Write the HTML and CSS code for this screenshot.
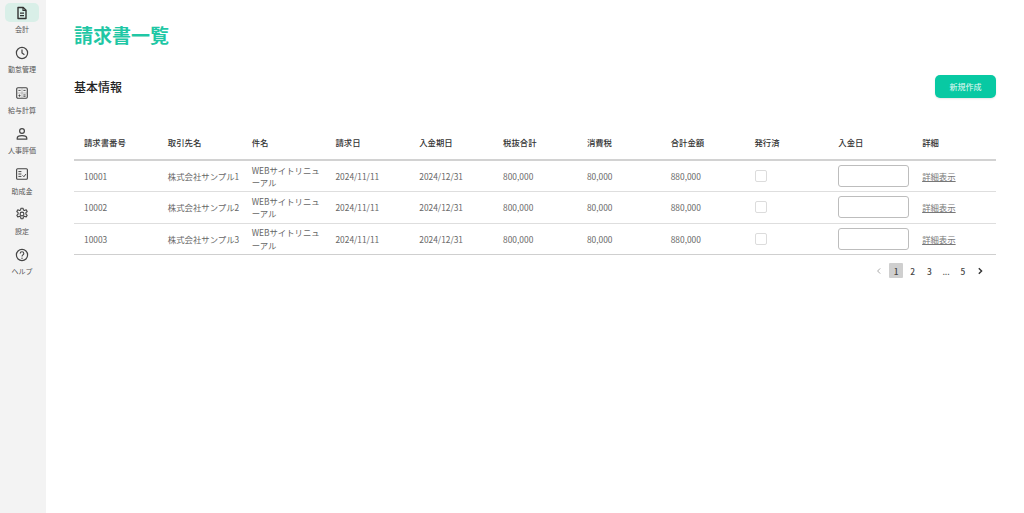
FILE: index.html
```html
<!DOCTYPE html>
<html lang="ja">
<head>
<meta charset="utf-8">
<title>請求書一覧</title>
<link rel="stylesheet" href="styles.css">
</head>
<body>
<div class="app">
  <nav class="sidebar">
    <a class="nav-item active">
      <span class="nav-icon"><svg viewBox="0 0 14 14" width="14" height="14"><path d="M3 1.5h5.2L11 4.3v8.2H3z" fill="none" stroke="#333" stroke-width="1.4" stroke-linejoin="round"/><path d="M8 1.5v3h3M5 7.2h4M5 9.6h4" fill="none" stroke="#333" stroke-width="1.2"/></svg></span>
      <span class="nav-label">会計</span>
    </a>
    <a class="nav-item">
      <span class="nav-icon"><svg viewBox="0 0 14 14" width="14" height="14"><circle cx="7" cy="7" r="5.6" fill="none" stroke="#444" stroke-width="1.2"/><path d="M7 3.6V7l2.4 1.8" fill="none" stroke="#444" stroke-width="1.2"/></svg></span>
      <span class="nav-label">勤怠管理</span>
    </a>
    <a class="nav-item">
      <span class="nav-icon"><svg viewBox="0 0 14 14" width="14" height="14"><rect x="1.7" y="1.7" width="10.6" height="10.6" rx="1.2" fill="none" stroke="#444" stroke-width="1.1"/><path d="M7 1.7v10.6M1.7 7h10.6" fill="none" stroke="#999" stroke-width=".6"/><path d="M3.4 4.4h2.2M8.4 4.4h2.2M3.4 9.6h2.2M4.5 8.5v2.2M8.4 8.9h2.2M8.4 10.3h2.2" fill="none" stroke="#444" stroke-width=".9"/></svg></span>
      <span class="nav-label">給与計算</span>
    </a>
    <a class="nav-item">
      <span class="nav-icon"><svg viewBox="0 0 14 14" width="14" height="14"><circle cx="7" cy="4" r="2.4" fill="none" stroke="#444" stroke-width="1.2"/><path d="M2.2 12.2v-1c0-1.6 2.2-2.6 4.8-2.6s4.8 1 4.8 2.6v1z" fill="none" stroke="#444" stroke-width="1.2" stroke-linejoin="round"/></svg></span>
      <span class="nav-label">人事評価</span>
    </a>
    <a class="nav-item">
      <span class="nav-icon"><svg viewBox="0 0 14 14" width="14" height="14"><rect x="1.6" y="1.8" width="10.8" height="10.4" rx="1" fill="none" stroke="#444" stroke-width="1.1"/><path d="M3.4 4.6h3M3.4 7h3M3.4 9.4h3M7.6 8.4l1.3 1.3 2-2.6" fill="none" stroke="#444" stroke-width="1"/></svg></span>
      <span class="nav-label">助成金</span>
    </a>
    <a class="nav-item">
      <span class="nav-icon"><svg viewBox="0 0 14 14" width="14" height="14"><path d="M6 1.2h2l.4 1.7 1.2.6 1.6-.7 1 1.7-1.3 1.2v1.4l1.3 1.2-1 1.7-1.6-.7-1.2.7-.4 1.7H6l-.4-1.7-1.2-.7-1.6.7-1-1.7 1.3-1.2V5.7L1.8 4.5l1-1.7 1.6.7 1.2-.6z" fill="none" stroke="#444" stroke-width="1.1" stroke-linejoin="round"/><circle cx="7" cy="7" r="1.9" fill="none" stroke="#444" stroke-width="1.1"/></svg></span>
      <span class="nav-label">設定</span>
    </a>
    <a class="nav-item">
      <span class="nav-icon"><svg viewBox="0 0 14 14" width="14" height="14"><circle cx="7" cy="7" r="5.6" fill="none" stroke="#444" stroke-width="1.2"/><path d="M5.2 5.5c0-1.1.8-1.8 1.8-1.8s1.8.7 1.8 1.7c0 1.4-1.8 1.5-1.8 3" fill="none" stroke="#444" stroke-width="1.1"/><circle cx="7" cy="10.2" r=".7" fill="#444"/></svg></span>
      <span class="nav-label">ヘルプ</span>
    </a>
  </nav>
  <main class="content">
    <h1 class="page-title">請求書一覧</h1>
    <div class="section-head">
      <h2 class="section-title">基本情報</h2>
      <button class="primary-btn" type="button">新規作成</button>
    </div>
    <table class="invoice-table">
      <thead>
        <tr>
          <th>請求書番号</th><th>取引先名</th><th>件名</th><th>請求日</th><th>入金期日</th><th>税抜合計</th><th>消費税</th><th>合計金額</th><th>発行済</th><th>入金日</th><th>詳細</th>
        </tr>
      </thead>
      <tbody>
        <tr>
          <td>10001</td><td>株式会社サンプル1</td><td>WEBサイトリニューアル</td><td>2024/11/11</td><td>2024/12/31</td><td>800,000</td><td>80,000</td><td>880,000</td>
          <td><span class="check"></span></td><td><span class="date-input"></span></td><td><a class="detail-link">詳細表示</a></td>
        </tr>
        <tr>
          <td>10002</td><td>株式会社サンプル2</td><td>WEBサイトリニューアル</td><td>2024/11/11</td><td>2024/12/31</td><td>800,000</td><td>80,000</td><td>880,000</td>
          <td><span class="check"></span></td><td><span class="date-input"></span></td><td><a class="detail-link">詳細表示</a></td>
        </tr>
        <tr>
          <td>10003</td><td>株式会社サンプル3</td><td>WEBサイトリニューアル</td><td>2024/11/11</td><td>2024/12/31</td><td>800,000</td><td>80,000</td><td>880,000</td>
          <td><span class="check"></span></td><td><span class="date-input"></span></td><td><a class="detail-link">詳細表示</a></td>
        </tr>
      </tbody>
    </table>
    <div class="pagination">
      <span class="page-item arrow muted"><svg viewBox="0 0 8 8" width="8" height="8"><path d="M5.2 1.4L2.6 4l2.6 2.6" fill="none" stroke="#aaa" stroke-width="1"/></svg></span>
      <span class="page-item current">1</span>
      <span class="page-item">2</span>
      <span class="page-item">3</span>
      <span class="page-item">...</span>
      <span class="page-item">5</span>
      <span class="page-item arrow"><svg viewBox="0 0 8 8" width="8" height="8"><path d="M2.8 1.2L5.6 4 2.8 6.8" fill="none" stroke="#333" stroke-width="1.4"/></svg></span>
    </div>
  </main>
</div>
</body>
</html>
```

FILE: styles.css
```css
* { box-sizing: border-box; }
html, body { margin: 0; height: 100%; background: #fff; }
body {
  font-family: "Noto Sans CJK JP", "Noto Sans", sans-serif;
  color: #333;
  overflow: hidden;
}
.app { display: flex; height: 513px; }
.sidebar {
  width: 46px;
  flex: none;
  background: #f3f3f3;
  display: flex;
  flex-direction: column;
  padding: 3px 2px 0 0;
}
.nav-item {
  display: flex;
  flex-direction: column;
  align-items: center;
  height: 40.4px;
}
.nav-icon {
  width: 34px;
  height: 19px;
  border-radius: 5px;
  display: flex;
  align-items: center;
  justify-content: center;
}
.active .nav-icon { background: #d9efe8; }
.nav-label {
  font-size: 7px;
  line-height: 10px;
  margin-top: 2px;
  color: #555;
  white-space: nowrap;
}
.content {
  flex: 1;
  padding: 0 28px;
  min-width: 0;
}
.page-title {
  margin: 0;
  padding-top: 21px;
  font-size: 19px;
  line-height: 28px;
  font-weight: 700;
  color: #1fc7a5;
}
.section-head {
  display: flex;
  justify-content: space-between;
  align-items: center;
  margin-top: 26px;
}
.section-title {
  margin: 0;
  font-size: 12px;
  line-height: 18px;
  font-weight: 500;
  color: #222;
}
.primary-btn {
  width: 61px;
  height: 23px;
  border: 0;
  padding: 0;
  border-radius: 5px;
  background: #08c9a3;
  color: #e8fbf6;
  font: 400 8px/23px "Noto Sans CJK JP", sans-serif;
  box-shadow: 0 1px 2px rgba(0, 0, 0, .1);
}
.invoice-table {
  width: 100%;
  margin-top: 27px;
  border-collapse: collapse;
  table-layout: fixed;
  font-size: 8.4px;
}
.invoice-table th {
  height: 35px;
  padding: 0 0 0 10px;
  text-align: left;
  font-weight: 500;
  color: #333;
  border-bottom: 2px solid #d2d2d2;
}
.invoice-table td {
  height: 31.5px;
  padding: 0 0 0 10px;
  color: #666;
  line-height: 12.5px;
  border-bottom: 1px solid #dedede;
}
.invoice-table tr:last-child td { border-bottom-color: #cfcfcf; }
.check {
  display: block;
  width: 12px;
  height: 12px;
  border: 1px solid #dcdcdc;
  border-radius: 2px;
  background: #fff;
}
.date-input {
  display: block;
  width: 71px;
  height: 22px;
  border: 1px solid #bdbdbd;
  border-radius: 3px;
  background: #fff;
}
.detail-link {
  color: #777;
  text-decoration: underline;
}
.pagination {
  display: flex;
  justify-content: flex-end;
  align-items: center;
  margin-top: 8px;
  padding-right: 9.5px;
  gap: 2.7px;
  font-size: 8.4px;
  font-weight: 500;
  color: #444;
}
.page-item {
  width: 14px;
  height: 15px;
  display: flex;
  align-items: center;
  justify-content: center;
}
.current { background: #cfcfcf; border-radius: 1px; }
.arrow { color: #333; }
```
